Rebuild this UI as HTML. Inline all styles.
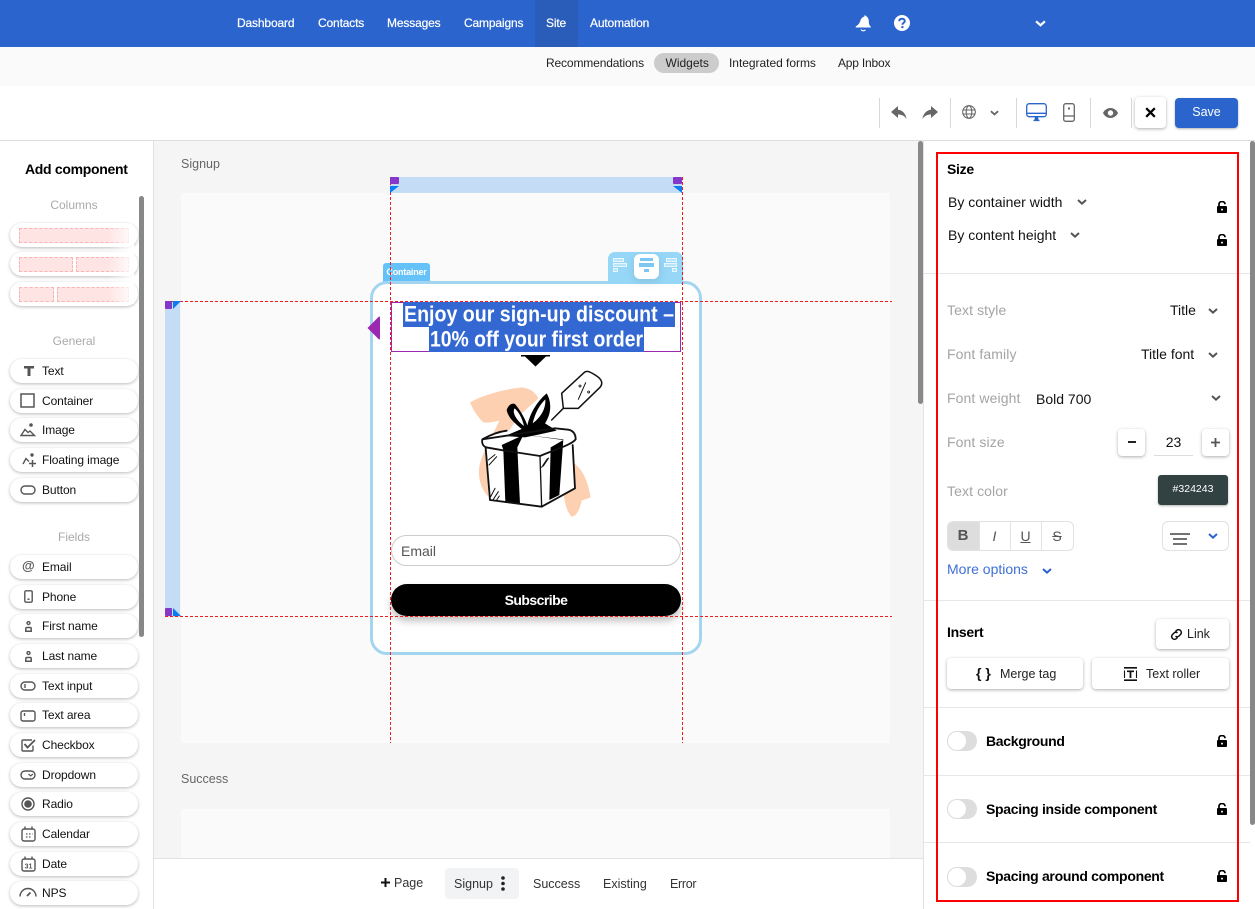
<!DOCTYPE html>
<html lang="en"><head><meta charset="utf-8"><title>Widget editor</title>
<style>
*{box-sizing:border-box}
html,body{margin:0;padding:0}
body{width:1255px;height:909px;overflow:hidden;position:relative;background:#fff;font-family:"Liberation Sans",sans-serif;color:#111;font-size:12px}
.a{position:absolute}
.t{position:absolute;white-space:nowrap;line-height:16px;height:16px}
svg{position:absolute;overflow:visible;display:block}
.nav{color:#fff;font-size:12px;top:15px;-webkit-text-stroke:.2px #fff;letter-spacing:-.15px}
.sub{font-size:12px;top:55px;color:#222}
.pill{position:absolute;left:10px;width:128px;height:24px;background:#fff;border-radius:12px;box-shadow:0 1px 3px rgba(0,0,0,.28)}
.side{left:42px;font-size:12px;letter-spacing:-.1px}
.head{color:#aaa;font-size:12px;width:148px;left:0;text-align:center}
.dash{position:absolute;border:1px dashed #f9b4b4;background:#ffe4e4;height:15px}
.sep{position:absolute;width:1px;top:98px;height:30px;background:#d8d8d8}
.lbl{color:#a4a4a4;font-size:14px;left:947px;letter-spacing:.1px}
.v{font-size:14px;color:#111}
.btn{position:absolute;background:#fff;border-radius:4px;box-shadow:0 1px 3px rgba(0,0,0,.32)}
.div{position:absolute;left:924px;width:326px;height:1px;background:#e6e6e6}
.b{font-weight:bold;font-size:14px;letter-spacing:-.3px}
.tg{position:absolute;left:947px;width:30px;height:20px;background:#ddd;border-radius:10px}
.tg i{position:absolute;left:0;top:0;width:20px;height:20px;border-radius:50%;background:#fff;border:1px solid #ddd}
.hp{position:absolute;width:9px;height:7px;background:#8437c8;border-radius:1px}
.gi{fill:none;stroke:#555;stroke-width:1.4}
</style></head><body>
<svg width="0" height="0" style="position:absolute"><defs>
<symbol id="lock" viewBox="0 0 10 12"><path d="M2 6V3.200A3 2.700 0 0 1 8 3.200" fill="none" stroke="#000" stroke-width="1.700"/><path fill-rule="evenodd" fill="#000" d="M1 5h8a1 1 0 0 1 1 1V11a1 1 0 0 1-1 1H1a1 1 0 0 1-1-1V6a1 1 0 0 1 1-1zM5 7.600a1 1 0 1 0 0 2 1 1 0 0 0 0-2z"/></symbol>
<symbol id="ch" viewBox="0 0 10 6"><path d="M1 1l4 3.600L9 1" fill="none" stroke="currentColor" stroke-width="2"/></symbol>
<symbol id="person" viewBox="0 0 7 11"><circle cx="3.500" cy="2" r="1.500" fill="none" stroke="#555" stroke-width="1.400"/><path d="M.8 10.200V7.500a1 1 0 0 1 1-1h3.400a1 1 0 0 1 1 1v2.700z" fill="none" stroke="#555" stroke-width="1.500"/></symbol>
</defs></svg>

<!-- top bar -->
<div class="a" style="left:0;top:0;width:1255px;height:47px;background:#2b64cd"></div>
<div class="a" style="left:535px;top:0;width:43px;height:47px;background:#2a5cb9"></div>
<div class="t nav" style="left:237px">Dashboard</div>
<div class="t nav" style="left:318px">Contacts</div>
<div class="t nav" style="left:387px">Messages</div>
<div class="t nav" style="left:464px">Campaigns</div>
<div class="t nav" style="left:546px">Site</div>
<div class="t nav" style="left:590px">Automation</div>
<svg style="left:855px;top:14px" width="17" height="18" viewBox="0 0 17 18"><path fill="#fff" d="M9.500 1.500c.5-.5 1.300-.2 1.300.5 2 1 3 3 3 5.500 0 2.500.7 4 2 5.200.2.500-.1.800-.5.800H1.200c-.6 0-.9-.6-.4-1C3 11 4.500 9.500 5.500 6.500 6 4.500 7.500 3 9.500 2.500z"/><path d="M6 15.500c.8 1.500 3.500 1.800 4.500.3" fill="none" stroke="#fff" stroke-width="1.100"/></svg>
<svg style="left:894px;top:15px" width="16" height="16" viewBox="0 0 16 16"><circle cx="8" cy="8" r="8" fill="#fff"/><path d="M5.200 6.200C5.300 4.500 6.500 3.700 8 3.700c1.700 0 2.800 1 2.800 2.300 0 1.800-2.400 1.900-2.400 3.700" fill="none" stroke="#2b64cd" stroke-width="2"/><circle cx="8.400" cy="12.100" r="1.200" fill="#2b64cd"/></svg>
<svg style="left:1035px;top:20px;color:#fff" width="11" height="7"><use href="#ch" width="11" height="7"/></svg>

<!-- sub nav -->
<div class="a" style="left:0;top:47px;width:1255px;height:39px;background:#fafafa"></div>
<div class="a" style="left:654px;top:53px;width:65px;height:20px;background:#ccc;border-radius:10px"></div>
<div class="t sub" style="left:546px;letter-spacing:-.14px">Recommendations</div>
<div class="t sub" style="left:665.500px">Widgets</div>
<div class="t sub" style="left:729px;letter-spacing:-.03px">Integrated forms</div>
<div class="t sub" style="left:838px;letter-spacing:-.2px">App Inbox</div>

<!-- toolbar -->
<div class="a" style="left:0;top:140px;width:1255px;height:1px;background:#ddd"></div>
<div class="sep" style="left:879px"></div><div class="sep" style="left:950px"></div><div class="sep" style="left:1016px"></div><div class="sep" style="left:1090px"></div><div class="sep" style="left:1131px"></div>
<svg style="left:891px;top:106px" width="16" height="14" viewBox="0 0 16 14"><path fill="#666" d="M7 0L0 6l7 6V8.500c3.500 0 6.300 1 8.500 4.500C15 8 11.500 4 7 3.700z"/></svg>
<svg style="left:922px;top:106px" width="16" height="14" viewBox="0 0 16 14"><path fill="#666" d="M9 0l7 6-7 6V8.500C5.500 8.500 2.700 9.500.5 13 1 8 4.500 4 9 3.700z"/></svg>
<svg style="left:962px;top:105px" width="14" height="14" viewBox="0 0 14 14"><g fill="none" stroke="#666" stroke-width="1.100"><circle cx="7" cy="7" r="6.300"/><ellipse cx="7" cy="7" rx="2.800" ry="6.300"/><path d="M.7 5h12.600M.7 9h12.600"/></g></svg>
<svg style="left:990px;top:110px;color:#666" width="9" height="6"><use href="#ch" width="9" height="6"/></svg>
<svg style="left:1026px;top:103px" width="21" height="19" viewBox="0 0 21 19"><g fill="none" stroke="#2b64cd" stroke-width="1.300"><rect x=".7" y=".7" width="19.600" height="13" rx="2.500"/><path d="M1 10.300h19M7.500 17.500h6"/></g><path d="M9 14h3l.7 3H8.300z" fill="#2b64cd"/></svg>
<svg style="left:1063px;top:103px" width="12" height="19" viewBox="0 0 12 19"><g fill="none" stroke="#666" stroke-width="1.300"><rect x=".7" y=".7" width="10.600" height="17.600" rx="2"/><path d="M1 13h10"/></g><rect x="5" y="4.500" width="2" height="2" fill="#666"/></svg>
<svg style="left:1103px;top:108px" width="15" height="10" viewBox="0 0 15 10"><path fill-rule="evenodd" fill="#666" d="M7.500 0C11 0 13.700 2.200 15 5c-1.300 2.800-4 5-7.500 5S1.300 7.800 0 5C1.300 2.200 4 0 7.500 0zm0 2.300a2.700 2.700 0 1 0 0 5.400 2.700 2.700 0 0 0 0-5.400z"/></svg>
<div class="btn" style="left:1135px;top:97px;width:31px;height:31px"></div>
<svg style="left:1145px;top:107px" width="11" height="11" viewBox="0 0 11 11"><path d="M1.200 1.200l8.600 8.600M9.800 1.200L1.200 9.800" stroke="#000" stroke-width="2.200" fill="none"/></svg>
<div class="a" style="left:1175px;top:98px;width:63px;height:30px;background:#2b64cd;border-radius:4px;box-shadow:0 1px 2px rgba(0,0,0,.3)"></div>
<div class="t" style="left:1175px;top:104px;width:63px;text-align:center;color:#fff;font-size:12.500px">Save</div>

<!-- left sidebar -->
<div class="a" style="left:153px;top:141px;width:1px;height:768px;background:#e2e2e2"></div>
<div class="t" style="left:25px;top:161px;font-weight:bold;font-size:14px;letter-spacing:-.3px;color:#000">Add component</div>
<div class="t head" style="top:197px">Columns</div>
<div class="pill" style="top:223px"></div><div class="pill" style="top:252px"></div><div class="pill" style="top:282px"></div>
<div class="dash" style="left:19px;top:228px;width:110px"></div>
<div class="dash" style="left:19px;top:257px;width:54px"></div><div class="dash" style="left:76px;top:257px;width:53px"></div>
<div class="dash" style="left:19px;top:287px;width:35px"></div><div class="dash" style="left:57px;top:287px;width:72px"></div>
<div class="a" style="left:108px;top:226px;width:26px;height:78px;background:linear-gradient(90deg,rgba(255,255,255,0),rgba(255,255,255,.95))"></div>
<div class="t head" style="top:333px">General</div>
<div class="pill" style="top:359px"></div><div class="pill" style="top:389px"></div><div class="pill" style="top:418px"></div><div class="pill" style="top:448px"></div><div class="pill" style="top:478px"></div>
<div class="t side" style="top:363px">Text</div>
<div class="t side" style="top:393px">Container</div>
<div class="t side" style="top:422px">Image</div>
<div class="t side" style="top:452px">Floating image</div>
<div class="t side" style="top:482px">Button</div>
<svg style="left:24px;top:366px" width="10" height="10" viewBox="0 0 10 10"><path d="M0 0h10v2.500H6.500V10h-3V2.500H0z" fill="#555"/></svg>
<svg style="left:20px;top:393px" width="15" height="15" viewBox="0 0 15 15"><rect x="1" y="1" width="13" height="13" fill="none" stroke="#555" stroke-width="1.500"/></svg>
<svg style="left:20px;top:423px" width="16" height="14" viewBox="0 0 16 14"><circle cx="11" cy="2" r="1.800" fill="#555"/><path class="gi" d="M1 12.500L5 6.500l3 3 2-1.500 4.500 4.500z"/></svg>
<svg style="left:22px;top:453px" width="16" height="15" viewBox="0 0 16 15"><circle cx="10" cy="2" r="1.700" fill="#555"/><path class="gi" d="M1 11l3-5.500 3 3"/><path d="M10.500 7v7M7 10.500h7" stroke="#555" stroke-width="1.500"/></svg>
<svg style="left:20px;top:485px" width="16" height="10" viewBox="0 0 16 10"><rect x="1" y="1" width="14" height="8" rx="4" class="gi"/></svg>
<div class="t head" style="top:529px">Fields</div>
<div class="pill" style="top:555px"></div><div class="pill" style="top:585px"></div><div class="pill" style="top:614px"></div><div class="pill" style="top:644px"></div><div class="pill" style="top:674px"></div><div class="pill" style="top:703px"></div><div class="pill" style="top:733px"></div><div class="pill" style="top:763px"></div><div class="pill" style="top:792px"></div><div class="pill" style="top:822px"></div><div class="pill" style="top:852px"></div><div class="pill" style="top:881px"></div>
<div class="t side" style="top:559px">Email</div>
<div class="t side" style="top:589px">Phone</div>
<div class="t side" style="top:618px">First name</div>
<div class="t side" style="top:648px">Last name</div>
<div class="t side" style="top:678px">Text input</div>
<div class="t side" style="top:707px">Text area</div>
<div class="t side" style="top:737px">Checkbox</div>
<div class="t side" style="top:767px">Dropdown</div>
<div class="t side" style="top:796px">Radio</div>
<div class="t side" style="top:826px">Calendar</div>
<div class="t side" style="top:856px">Date</div>
<div class="t side" style="top:885px">NPS</div>
<div class="t" style="left:22px;top:558px;font-size:13px;font-weight:bold;color:#555">@</div>
<svg style="left:24px;top:590px" width="9" height="13" viewBox="0 0 9 13"><rect x=".8" y=".8" width="7.400" height="11.400" rx="1.300" class="gi"/><rect x="3.500" y="8.500" width="2" height="1.500" fill="#555"/></svg>
<svg style="left:25px;top:621px" width="7" height="11"><use href="#person" width="7" height="11"/></svg>
<svg style="left:25px;top:651px" width="7" height="11"><use href="#person" width="7" height="11"/></svg>
<svg style="left:20px;top:681px" width="16" height="10" viewBox="0 0 16 10"><rect x="1" y="1" width="14" height="8" rx="4" class="gi"/><path d="M5 3v4" stroke="#555" stroke-width="1.400"/></svg>
<svg style="left:20px;top:710px" width="16" height="12" viewBox="0 0 16 12"><rect x="1" y="1" width="14" height="10" rx="2" class="gi"/><path d="M4.500 3v3" stroke="#555" stroke-width="1.400"/></svg>
<svg style="left:21px;top:738px" width="15" height="14" viewBox="0 0 15 14"><path class="gi" d="M12 7.500V12a1 1 0 0 1-1 1H2a1 1 0 0 1-1-1V3a1 1 0 0 1 1-1h9"/><path d="M3.500 6l3 3.500L14 2" fill="none" stroke="#555" stroke-width="1.800"/></svg>
<svg style="left:20px;top:770px" width="16" height="10" viewBox="0 0 16 10"><rect x="1" y="1" width="14" height="8" rx="4" class="gi"/><path d="M8.500 4l2.200 2 2.200-2" fill="none" stroke="#555" stroke-width="1.200"/></svg>
<svg style="left:21px;top:797px" width="14" height="14" viewBox="0 0 14 14"><circle cx="7" cy="7" r="6" class="gi"/><circle cx="7" cy="7" r="3.800" fill="#555"/></svg>
<svg style="left:21px;top:826px" width="15" height="16" viewBox="0 0 15 16"><rect x="1" y="3" width="13" height="12" rx="2" class="gi"/><path d="M4 .5v3M11 .5v3" stroke="#555" stroke-width="1.400"/><path d="M5 8h1.500M8 8h1.500M11 8h.5M5 11h1.500M8 11h1.500" stroke="#555" stroke-width="1.300"/></svg>
<svg style="left:21px;top:856px" width="15" height="16" viewBox="0 0 15 16"><rect x="1" y="3" width="13" height="12" rx="2" class="gi"/><path d="M4 .5v3M11 .5v3" stroke="#555" stroke-width="1.400"/><text x="7.500" y="12.500" font-size="7" font-weight="bold" text-anchor="middle" fill="#555" font-family="Liberation Sans">31</text></svg>
<svg style="left:19px;top:886px" width="18" height="11" viewBox="0 0 18 11"><path class="gi" d="M1 10.500a8 8 0 0 1 16 0"/><path d="M8 10l3.500-3.500" stroke="#555" stroke-width="1.800"/></svg>
<div class="a" style="left:139px;top:196px;width:5px;height:441px;background:#888;border-radius:2.500px"></div>

<!-- canvas -->
<div class="a" style="left:154px;top:141px;width:770px;height:717px;background:#f5f5f5"></div>
<div class="t" style="left:181px;top:156px;color:#666;font-size:12.500px">Signup</div>
<div class="t" style="left:181px;top:771px;color:#666;font-size:12.500px">Success</div>
<div class="a" style="left:181px;top:193px;width:709px;height:550px;background:#fafafa"></div>
<div class="a" style="left:181px;top:809px;width:709px;height:49px;background:#fafafa"></div>
<div class="a" style="left:390px;top:177px;width:292px;height:16px;background:#c5dcf6"></div>
<div class="a" style="left:165px;top:301px;width:15px;height:316px;background:#c5dcf6"></div>

<!-- container -->
<div class="a" style="left:383px;top:263px;width:47px;height:20px;background:#64c2f8;border-radius:3px 3px 0 0"></div>
<div class="t" style="left:383px;top:264px;width:47px;text-align:center;color:#fff;font-size:9px;font-weight:bold;letter-spacing:-.2px">Container</div>
<div class="a" style="left:608px;top:252px;width:75px;height:32px;background:#96d7f7;border-radius:7px 7px 0 0"></div>
<div class="a" style="left:370px;top:281px;width:332px;height:374px;background:#fff;border:3px solid #a3d5f1;border-radius:17px"></div>
<div class="a" style="left:608px;top:280px;width:75px;height:4px;background:#96d7f7"></div>
<div class="a" style="left:634px;top:254px;width:25px;height:25px;background:#fff;border-radius:6px;box-shadow:0 3px 10px rgba(0,0,0,.1)"></div>
<svg style="left:613px;top:258px" width="14" height="15" viewBox="0 0 14 15"><g fill="#b8e4fa" stroke="#e8f6fd" stroke-width="1"><rect x=".5" y=".5" width="10" height="3"/><rect x=".5" y="5.500" width="13" height="3"/><rect x=".5" y="10.500" width="4" height="3"/></g></svg>
<svg style="left:639px;top:258px" width="15" height="15" viewBox="0 0 15 15" fill="#7cc8f2"><rect x="1" width="13" height="3"/><rect y="5" width="15" height="4"/><rect x="5" y="11" width="5" height="3"/></svg>
<svg style="left:664px;top:258px" width="14" height="15" viewBox="0 0 14 15"><g fill="#b8e4fa" stroke="#e8f6fd" stroke-width="1"><rect x="2.500" y=".5" width="10" height="3"/><rect x=".5" y="5.500" width="12" height="3"/><rect x="8.500" y="10.500" width="4" height="3"/></g></svg>

<!-- headline -->
<div class="a" style="left:391px;top:302px;width:290px;height:50px;border:1px solid #9c27b0;background:#fff"></div>
<div class="a" style="left:403px;top:302px;width:272px;height:25px;background:#3367d1"></div>
<div class="a" style="left:429px;top:327px;width:215px;height:25px;background:#3367d1"></div>
<svg style="left:0;top:0" width="1255" height="909"><g fill="#fff" font-family="Liberation Sans" font-weight="bold" font-size="22"><text x="404" y="321.500" textLength="270" lengthAdjust="spacingAndGlyphs">Enjoy our sign-up discount –</text><text x="430" y="346.500" textLength="213" lengthAdjust="spacingAndGlyphs">10% off your first order</text></g></svg>
<svg style="left:366px;top:315px" width="15" height="26" viewBox="0 0 15 26"><path d="M13 1.500L1.500 13 13 24.500a1 1 0 0 0 1-1V2.500a1 1 0 0 0-1-1z" fill="#9c27b0"/></svg>
<svg style="left:521px;top:355px" width="29" height="12" viewBox="0 0 29 12"><path d="M0 0h29v1.500h-4L14.500 11.500 4 1.500H0z" fill="#000"/></svg>

<!-- gift -->
<svg style="left:440px;top:360px" width="180" height="165" viewBox="0 0 540 495">
<path fill="#fdd0b1" d="M90 127C130 105 190 88 245 82C270 85 285 95 295 115L240 165L215 200L140 320L145 410C125 390 115 360 117 330C120 290 150 240 178 182C160 186 145 190 130 187C112 170 100 150 90 127z"/>
<path fill="#fdd0b1" d="M395 305C430 325 445 370 452 412L425 422C420 445 410 470 395 470C380 455 375 430 372 410z"/>
<path fill="#fff" d="M138 266L300 290L398 255L405 385L305 440L150 420z"/>
<path fill="#fff" d="M127 237L200 212L330 200L385 208C400 212 407 222 407 238L300 287L195 271L138 262z"/>
<g fill="#000">
<path d="M185 255L250 225L232 262L240 432L196 426L190 270z"/>
<path d="M255 225L370 238L358 405L328 420L332 262L370 240z"/>
<path d="M245 207C225 190 205 175 200 150C205 135 215 128 225 132C240 150 255 175 262 196C270 160 290 125 320 100C335 125 335 160 315 190L350 212L290 225L255 232L195 228z"/>
</g>
<path fill="#fff" d="M224 145C216 155 226 178 252 198C247 175 236 155 224 145zM316 118C298 135 285 160 278 190C298 175 318 150 316 118z"/>
<g fill="none" stroke="#111" stroke-linejoin="round" stroke-linecap="round">
<path stroke-width="5.500" d="M127 238C150 225 175 215 200 212M345 205L385 209C400 212 407 222 407 238C395 255 340 270 300 288L195 272L138 262C128 258 125 248 127 238z"/>
<path stroke-width="5.500" d="M137 264L150 420L305 440L405 385L398 255"/>
<path stroke-width="4" d="M300 290L305 440"/>
<path stroke-width="3" d="M145 300L165 284M147 315L170 290M305 322L322 296M310 318L326 294M152 410L165 385M160 418L175 395M170 420L178 408"/>
<path stroke-width="4.500" d="M335 180L370 145L365 100L432 38C440 30 450 35 470 48C485 58 490 70 480 82L415 145L370 145"/>
<path stroke-width="3" d="M415 118L437 68"/>
<circle cx="420" cy="78" r="3" stroke-width="2.500"/><circle cx="446" cy="96" r="3" stroke-width="2.500"/>
</g>
</svg>

<!-- form -->
<div class="a" style="left:391px;top:535px;width:290px;height:31px;background:#fff;border:1px solid #ccc;border-radius:16px"></div>
<div class="t" style="left:401px;top:543px;font-size:14px;color:#555">Email</div>
<div class="a" style="left:391px;top:584px;width:290px;height:32px;background:#000;border-radius:16px;box-shadow:0 5px 8px rgba(0,0,0,.25)"></div>
<div class="t" style="left:391px;top:592px;width:290px;text-align:center;color:#fff;font-weight:bold;font-size:14px;letter-spacing:-.55px">Subscribe</div>

<!-- guides -->
<svg style="left:0;top:0" width="1255" height="909"><g stroke="#f01c1c" stroke-width="1" stroke-dasharray="3 2" fill="none"><path d="M390.500 177V743M682.500 177V743M165 301.500H892M165 616.500H892"/></g></svg>
<div class="hp" style="left:390px;top:177px"></div><div class="hp" style="left:673px;top:177px"></div>
<div class="hp" style="left:165px;top:301px;width:7px;height:8px"></div><div class="hp" style="left:165px;top:608px;width:7px;height:8px"></div>
<svg style="left:390px;top:186px" width="9" height="7"><path d="M0 0h9L0 7z" fill="#0a7cf5"/></svg>
<svg style="left:673px;top:186px" width="9" height="7"><path d="M0 0h9v7z" fill="#0a7cf5"/></svg>
<svg style="left:173px;top:301px" width="8" height="8"><path d="M0 0h8L0 8z" fill="#0a7cf5"/></svg>
<svg style="left:173px;top:608px" width="8" height="8"><path d="M0 0l8 8H0z" fill="#0a7cf5"/></svg>
<div class="a" style="left:918px;top:141px;width:5px;height:263px;background:#888;border-radius:2.500px"></div>

<!-- bottom bar -->
<div class="a" style="left:154px;top:858px;width:770px;height:51px;background:#fff;border-top:1px solid #e2e2e2"></div>
<div class="a" style="left:445px;top:868px;width:74px;height:31px;background:#f2f3f5;border-radius:4px"></div>
<svg style="left:381px;top:878px" width="9" height="9"><path d="M4.500 0v9M0 4.500h9" stroke="#111" stroke-width="2"/></svg>
<div class="t" style="left:394px;top:875px;font-size:12.500px;color:#333">Page</div>
<div class="t" style="left:454px;top:876px;font-size:12.500px;color:#333">Signup</div>
<svg style="left:501px;top:876px" width="4" height="15"><circle cx="2" cy="2" r="1.800" fill="#222"/><circle cx="2" cy="7.500" r="1.800" fill="#222"/><circle cx="2" cy="13" r="1.800" fill="#222"/></svg>
<div class="t" style="left:533px;top:876px;font-size:12.500px;color:#333">Success</div>
<div class="t" style="left:603px;top:876px;font-size:12.500px;color:#333">Existing</div>
<div class="t" style="left:670px;top:876px;font-size:12.500px;color:#333;letter-spacing:-.3px">Error</div>

<!-- right panel -->
<div class="a" style="left:923px;top:141px;width:1px;height:768px;background:#e2e2e2"></div>
<div class="div" style="top:273px"></div><div class="div" style="top:600px"></div><div class="div" style="top:707px"></div><div class="div" style="top:775px"></div><div class="div" style="top:842px"></div>
<div class="a" style="left:1250px;top:141px;width:5px;height:684px;background:#888;border-radius:2.500px"></div>
<div class="t b" style="left:947px;top:161px;color:#000">Size</div>
<div class="t v" style="left:948px;top:194px">By container width</div>
<svg style="left:1077px;top:199px;color:#555" width="10" height="6"><use href="#ch" width="10" height="6"/></svg>
<svg style="left:1217px;top:201px" width="10" height="12"><use href="#lock" width="10" height="12"/></svg>
<div class="t v" style="left:948px;top:227px">By content height</div>
<svg style="left:1070px;top:232px;color:#555" width="10" height="6"><use href="#ch" width="10" height="6"/></svg>
<svg style="left:1217px;top:234px" width="10" height="12"><use href="#lock" width="10" height="12"/></svg>

<div class="t lbl" style="top:302px">Text style</div>
<div class="t v" style="left:1170px;top:302px">Title</div>
<svg style="left:1208px;top:308px;color:#555" width="10" height="6"><use href="#ch" width="10" height="6"/></svg>
<div class="t lbl" style="top:346px">Font family</div>
<div class="t v" style="left:1141px;top:346px">Title font</div>
<svg style="left:1208px;top:352px;color:#555" width="10" height="6"><use href="#ch" width="10" height="6"/></svg>
<div class="t lbl" style="top:390px">Font weight</div>
<div class="t v" style="left:1036px;top:391px">Bold 700</div>
<svg style="left:1211px;top:395px;color:#555" width="10" height="6"><use href="#ch" width="10" height="6"/></svg>
<div class="t lbl" style="top:434px">Font size</div>
<div class="btn" style="left:1118px;top:429px;width:27px;height:27px"></div>
<div class="a" style="left:1128px;top:441px;width:8px;height:2px;background:#222"></div>
<div class="t v" style="left:1154px;top:434px;width:39px;text-align:center">23</div>
<div class="a" style="left:1154px;top:455px;width:39px;height:1px;background:#ddd"></div>
<div class="btn" style="left:1202px;top:429px;width:27px;height:27px"></div>
<svg style="left:1211px;top:438px" width="9" height="9"><path d="M4.500 0v9M0 4.500h9" stroke="#555" stroke-width="1.800"/></svg>
<div class="t lbl" style="top:483px">Text color</div>
<div class="a" style="left:1158px;top:475px;width:70px;height:30px;background:#324243;border-radius:3px;box-shadow:0 1px 2px rgba(0,0,0,.3)"></div>
<div class="t" style="left:1158px;top:481px;width:70px;text-align:center;color:#fff;font-size:10.500px">#324243</div>
<div class="a" style="left:947px;top:521px;width:127px;height:30px;border:1px solid #e2e2e2;border-radius:6px;background:#fff;overflow:hidden"><div class="a" style="left:0;top:0;width:31px;height:30px;background:#ddd"></div><div class="a" style="left:62px;top:0;width:1px;height:30px;background:#e2e2e2"></div><div class="a" style="left:93px;top:0;width:1px;height:30px;background:#e2e2e2"></div><div class="a" style="left:31px;top:0;width:1px;height:30px;background:#e2e2e2"></div></div>
<div class="t" style="left:947px;top:528px;width:32px;text-align:center;font-weight:bold;font-size:15px;color:#555">B</div>
<div class="t" style="left:979px;top:528px;width:31px;text-align:center;font-style:italic;font-size:14px;color:#555">I</div>
<div class="t" style="left:1010px;top:528px;width:31px;text-align:center;text-decoration:underline;font-size:14px;color:#555">U</div>
<div class="t" style="left:1041px;top:528px;width:32px;text-align:center;text-decoration:line-through;font-size:14px;color:#555">S</div>
<div class="a" style="left:1162px;top:521px;width:67px;height:30px;border:1px solid #e2e2e2;border-radius:6px;background:#fff"></div>
<svg style="left:1170px;top:533px" width="20" height="12"><path d="M0 1h20M3 6h14M3 11h14" stroke="#444" stroke-width="1.500"/></svg>
<svg style="left:1208px;top:533px;color:#2b64cd" width="10" height="6"><use href="#ch" width="10" height="6"/></svg>
<div class="t" style="left:947px;top:561px;font-size:14px;color:#3f6fd6">More options</div>
<svg style="left:1042px;top:568px;color:#2b64cd" width="10" height="6"><use href="#ch" width="10" height="6"/></svg>

<div class="t b" style="left:947px;top:624px;color:#000">Insert</div>
<div class="btn" style="left:1156px;top:619px;width:73px;height:30px"></div>
<svg style="left:1170px;top:628px" width="13" height="13" viewBox="0 0 13 13"><g fill="none" stroke="#111" stroke-width="1.500"><path d="M5.500 3.500l1-1a2.800 2.800 0 0 1 4 4l-1.500 1.500a2.800 2.800 0 0 1-3.500.2"/><path d="M7.500 9.500l-1 1a2.800 2.800 0 0 1-4-4L4 5a2.800 2.800 0 0 1 3.500-.2"/></g></svg>
<div class="t" style="left:1187px;top:626px;font-size:12.500px;color:#222">Link</div>
<div class="btn" style="left:947px;top:658px;width:136px;height:31px"></div>
<div class="t" style="left:976px;top:665px;font-size:14px;font-weight:bold;color:#111">{ }</div>
<div class="t" style="left:1000px;top:666px;font-size:12.500px;color:#222">Merge tag</div>
<div class="btn" style="left:1092px;top:658px;width:137px;height:31px"></div>
<svg style="left:1123px;top:667px" width="15" height="14" viewBox="0 0 15 14"><path d="M1 .8h13M1 13.200h13" stroke="#111" stroke-width="1.600"/><path d="M1.500 3.500V11M13.500 3.500V11" stroke="#111" stroke-width="1.100"/><path d="M4 3.500h7v1.600H8.400V11H6.600V5.100H4z" fill="#111"/></svg>
<div class="t" style="left:1146px;top:666px;font-size:12.500px;color:#222">Text roller</div>

<div class="tg" style="top:731px"><i></i></div>
<div class="t b" style="left:986px;top:733px;color:#000">Background</div>
<svg style="left:1217px;top:735px" width="10" height="12"><use href="#lock" width="10" height="12"/></svg>
<div class="tg" style="top:799px"><i></i></div>
<div class="t b" style="left:986px;top:801px;color:#000">Spacing inside component</div>
<svg style="left:1217px;top:803px" width="10" height="12"><use href="#lock" width="10" height="12"/></svg>
<div class="tg" style="top:867px"><i></i></div>
<div class="t b" style="left:986px;top:868px;color:#000">Spacing around component</div>
<svg style="left:1217px;top:870px" width="10" height="12"><use href="#lock" width="10" height="12"/></svg>

<div class="a" style="left:936px;top:152px;width:303px;height:750px;border:2px solid #f00"></div>
</body></html>
